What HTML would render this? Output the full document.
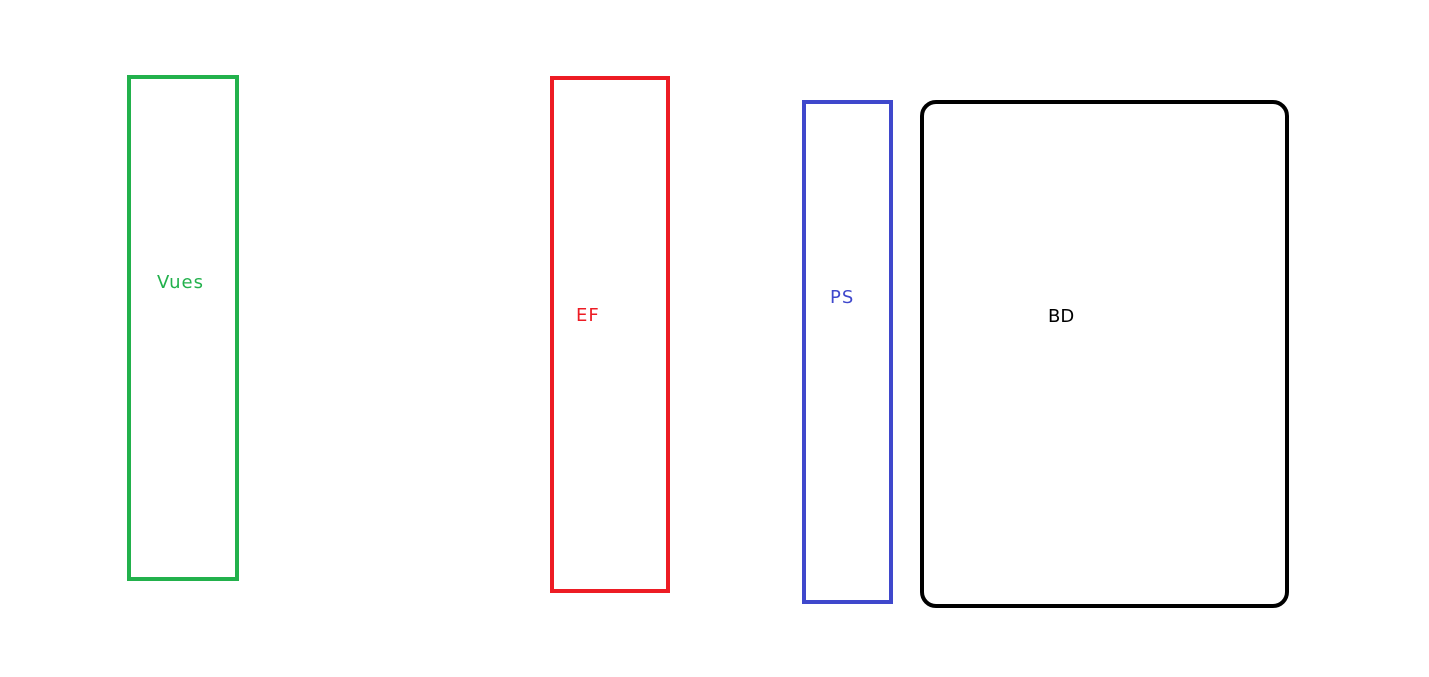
<!DOCTYPE html>
<html><head><style>
body{margin:0;width:1429px;height:677px;background:#fff;position:relative;overflow:hidden;font-family:"DejaVu Sans","Liberation Sans",sans-serif;font-size:18px;letter-spacing:1px}
.b{position:absolute;box-sizing:border-box;border:4px solid}
.t{position:absolute;line-height:20px}
</style></head><body>
<div class="b" style="left:127px;top:75px;width:112px;height:506px;border-color:#22b14c"></div>
<div class="b" style="left:550px;top:76px;width:120px;height:517px;border-color:#ed1c24"></div>
<div class="b" style="left:802px;top:100px;width:91px;height:504px;border-color:#3f48cc"></div>
<div class="b" style="left:920px;top:100px;width:369px;height:508px;border-color:#000;border-radius:16px"></div>
<div class="t" style="left:157px;top:273px;color:#22b14c">Vues</div>
<div class="t" style="left:576px;top:306px;color:#ed1c24">EF</div>
<div class="t" style="left:830px;top:288px;color:#3f48cc">PS</div>
<div class="t" style="left:1048px;top:307px;color:#000;letter-spacing:0">BD</div>
</body></html>
